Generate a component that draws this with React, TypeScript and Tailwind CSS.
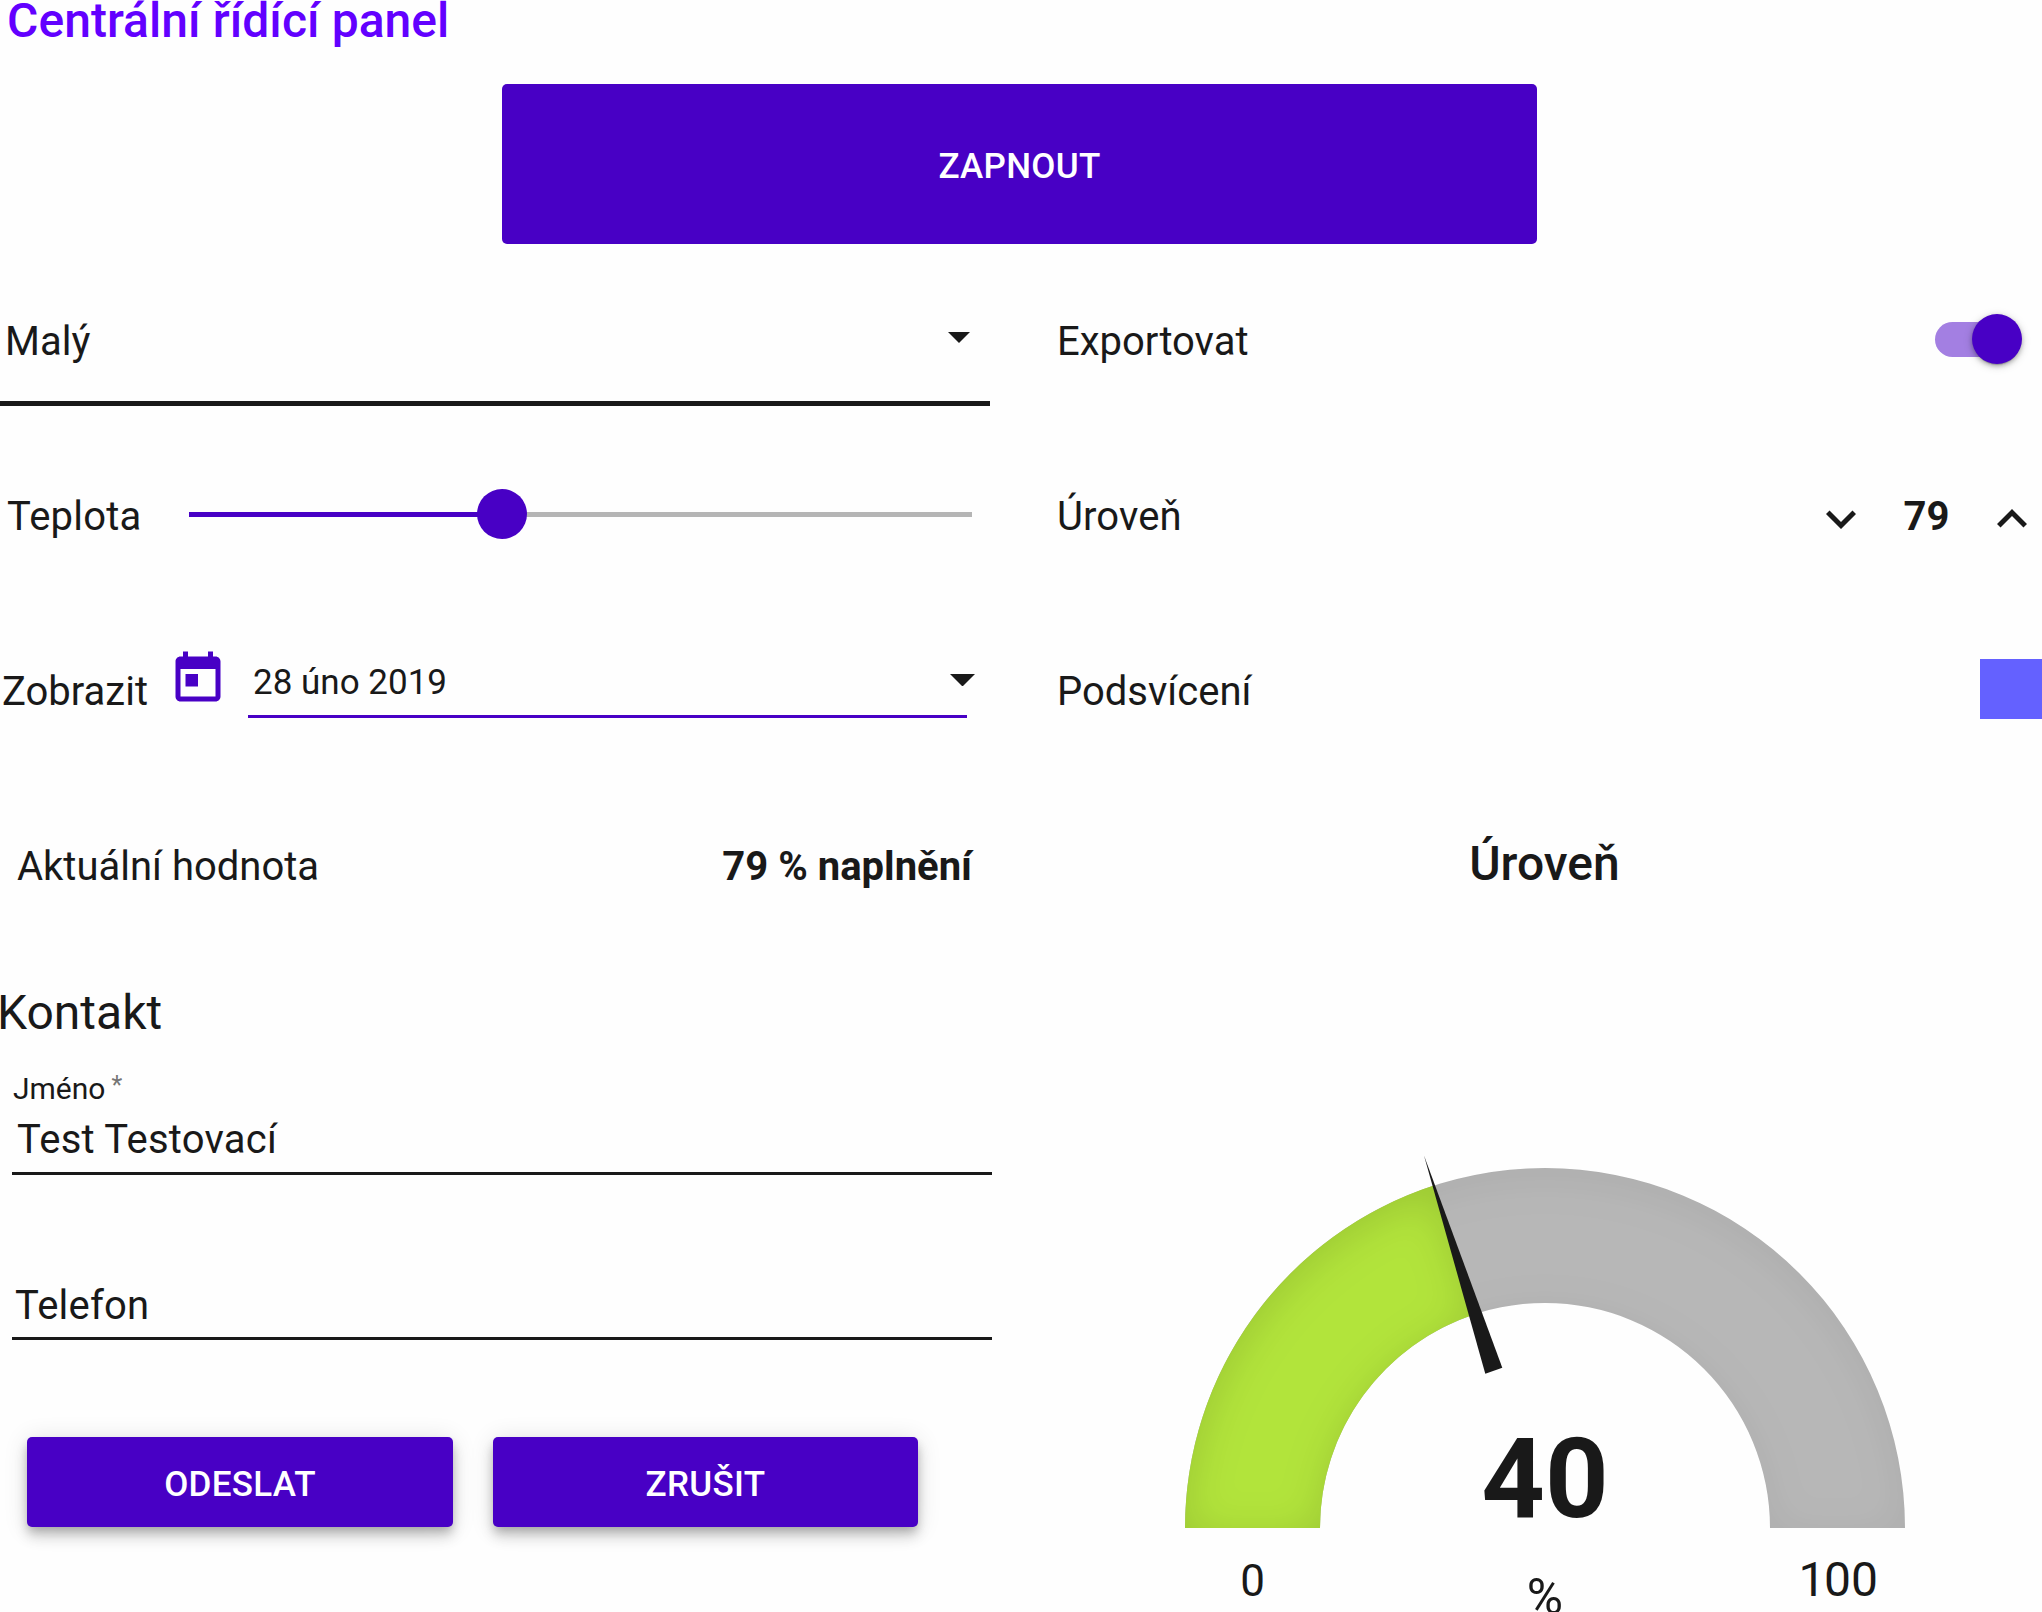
import type { ReactNode } from "react";

const CX = 1545;
const CY = 1528;
const OUTER = 360;
const INNER = 225;

function point(radius: number, percent: number) {
  const angle = Math.PI * (1 - percent / 100);
  return `${(CX + radius * Math.cos(angle)).toFixed(2)} ${(CY - radius * Math.sin(angle)).toFixed(2)}`;
}

function band(from: number, to: number) {
  return `M${point(OUTER, from)}A${OUTER} ${OUTER} 0 0 1 ${point(OUTER, to)}L${point(INNER, to)}A${INNER} ${INNER} 0 0 0 ${point(INNER, from)}Z`;
}

function InnerShadow({ id, opacity }: { id: string; opacity: number }) {
  return (
    <filter id={id} x="-10%" y="-10%" width="120%" height="120%" colorInterpolationFilters="sRGB">
      <feOffset dx="0" dy="8" />
      <feGaussianBlur result="blurred" stdDeviation="22" />
      <feComposite operator="out" in="SourceGraphic" in2="blurred" result="inverse" />
      <feFlood floodColor="#000" floodOpacity={opacity} result="color" />
      <feComposite operator="in" in="color" in2="inverse" result="shadow" />
      <feComposite operator="over" in="shadow" in2="SourceGraphic" />
    </filter>
  );
}

function Gauge() {
  return (
    <svg className="block h-[658px] w-[986px]" viewBox="1056 954 986 658" fill="#191919">
      <defs>
        <InnerShadow id="trackShade" opacity={0.06} />
        <InnerShadow id="levelShade" opacity={0.13} />
      </defs>
      <path d={band(0, 100)} fill="#b7b7b7" filter="url(#trackShade)" />
      <path d={band(0, 40)} fill="#b2e43b" filter="url(#levelShade)" />
      <path d="M1424 1155.5L1502.3 1367.7L1485.3 1373.7Z" />
      <text x="1545" y="1516.7" textAnchor="middle" fontSize="111" fontWeight="700">40</text>
      <text x="1252.5" y="1596.3" textAnchor="middle" fontSize="44">0</text>
      <text x="1545" y="1614" textAnchor="middle" fontSize="49.5">%</text>
      <text x="1838.200" y="1596" textAnchor="middle" fontSize="48">
        1<tspan dx="-1.5">00</tspan>
      </text>
    </svg>
  );
}

function Row({ children, className = "" }: { children: ReactNode; className?: string }) {
  return <div className={`flex h-[175px] items-center ${className}`}>{children}</div>;
}

function SelectField() {
  return (
    <div className="h-[175px]">
      <div className="flex h-[152px] w-[990px] items-center justify-between border-b-[5px] border-[#191919] pt-[28px] pr-5 pl-[5px]">
        <span className="mb-px">Malý</span>
        <svg className="mb-2 h-[11px] w-[22px]" viewBox="0 0 22 11" fill="currentColor">
          <path d="M0 0h22L11 11z" />
        </svg>
      </div>
    </div>
  );
}

function Slider() {
  return (
    <div className="mb-[5px] flex items-center">
      <div className="mt-px h-[5px] w-[289px] bg-[#4800c5]" />
      <div className="z-10 -mx-px size-[50px] rounded-full bg-[#4800c5]" />
      <div className="mt-px h-[5px] w-[446px] bg-[#b5b5b5]" />
    </div>
  );
}

function DateField() {
  return (
    <>
      <svg className="mb-[25px] ml-5 size-[60px] shrink-0" viewBox="0 0 24 24" fill="#4800c5">
        <path d="M19 3h-1V1h-2v2H8V1H6v2H5c-1.11 0-1.99.9-1.99 2L3 19c0 1.1.89 2 2 2h14c1.1 0 2-.9 2-2V5c0-1.1-.9-2-2-2zm0 16H5V8h14v11zM7 10h5v5H7z" />
      </svg>
      <div className="mb-[27px] ml-5 flex h-20 w-[719px] items-center justify-between border-b-[3px] border-[#4800c5] pt-3 pl-[5px] text-[35px] leading-[41px]">
        <span>28 úno 2019</span>
        <svg className="-mr-[7.5px] mb-[5px] h-[12.5px] w-[25px]" viewBox="0 0 25 12.5" fill="currentColor">
          <path d="M0 0h25L12.5 12.5z" />
        </svg>
      </div>
    </>
  );
}

function Switch() {
  return (
    <div className="relative mr-[27px] mb-[5px] h-[35px] w-20 rounded-full bg-[#a37fe2]">
      <div className="absolute -top-[8px] -right-[7px] size-[50px] rounded-full bg-[#4800c5] shadow-[0_3px_1px_-2px_rgba(0,0,0,0.2),0_2px_4px_0_rgba(0,0,0,0.25),0_2px_10px_0_rgba(0,0,0,0.18)]" />
    </div>
  );
}

function Stepper() {
  return (
    <div className="flex items-center">
      <svg className="mt-[5px] size-[60px]" viewBox="0 0 24 24" fill="currentColor">
        <path d="M16.59 8.59L12 13.17 7.41 8.59 6 10l6 6 6-6z" />
      </svg>
      <span className="w-[111px] text-center font-bold">79</span>
      <svg className="mt-[5px] size-[60px]" viewBox="0 0 24 24" fill="currentColor">
        <path d="M12 8l-6 6 1.41 1.41L12 10.83l4.59 4.58L18 14z" />
      </svg>
    </div>
  );
}

function ActionButton({ children, className }: { children: ReactNode; className: string }) {
  return (
    <button
      className={`flex h-[90px] items-center justify-center rounded-[5px] bg-[#4800c5] pt-1 text-[35px] leading-[41px] font-medium tracking-[0.3px] text-white shadow-[0_5px_10px_-2.5px_rgba(0,0,0,0.2),0_10px_12.5px_0_rgba(0,0,0,0.14),0_2.5px_25px_0_rgba(0,0,0,0.12)] ${className}`}
    >
      {children}
    </button>
  );
}

export default function App() {
  return (
    <div className="h-[1612px] w-[2042px] overflow-hidden bg-[#fefefe] font-['Roboto',sans-serif] text-[40px] leading-[47px] text-[#191919]">
      <div className="flex h-[254px] flex-col">
        <h1 className="-mt-2 pl-[7px] text-[48px] leading-[57px] font-medium tracking-[0.05px] text-[#6200ff]">
          Centrální řídící panel
        </h1>
        <button className="mt-[35px] ml-[502px] flex h-40 w-[1035px] items-center justify-center rounded-[5px] bg-[#4800c5] pt-1 text-[35px] leading-[41px] font-medium tracking-[0.3px] text-white">
          ZAPNOUT
        </button>
      </div>

      <div className="grid grid-cols-[1056px_986px]">
        <div>
          <SelectField />
          <Row className="pl-[7px]">
            <span className="w-[182px] tracking-[0.2px]">Teplota</span>
            <Slider />
          </Row>
          <Row className="pl-[2px]">
            <span className="w-[146px]">Zobrazit</span>
            <DateField />
          </Row>
          <Row className="w-[972px] justify-between pl-[17px]">
            <span>Aktuální hodnota</span>
            <span className="font-bold">79 % naplnění</span>
          </Row>

          <h2 className="mt-[30px] -ml-[3px] text-[48px] leading-[57px]">Kontakt</h2>
          <div className="mt-[30px] ml-3 w-[980px] border-b-[3px] border-[#191919] pb-[9px]">
            <div className="flex gap-[6px] pl-px text-[30px] leading-[35px]">
              Jméno<span className="text-[25px] leading-[29px] text-[#757575]">*</span>
            </div>
            <div className="pt-[10px] pl-[5px] tracking-[0.25px]">Test Testovací</div>
          </div>
          <div className="mt-[107px] ml-3 w-[980px] border-b-[3px] border-[#191919] pb-2 pl-[3px] tracking-[0.2px]">Telefon</div>
          <div className="mt-[97px] ml-[27px] flex gap-10">
            <ActionButton className="w-[426px]">ODESLAT</ActionButton>
            <ActionButton className="w-[425px]">ZRUŠIT</ActionButton>
          </div>
        </div>

        <div>
          <Row className="justify-between pl-px">
            <span>Exportovat</span>
            <Switch />
          </Row>
          <Row className="justify-between pl-px">
            <span className="tracking-[0.1px]">Úroveň</span>
            <Stepper />
          </Row>
          <Row className="justify-between pl-px">
            <span>Podsvícení</span>
            <div className="mb-[5px] h-[60px] w-[62px] bg-[#6461ff]" />
          </Row>
          <Row className="justify-center pr-[9px]">
            <h2 className="mb-[6px] text-[48px] leading-[57px] font-medium">Úroveň</h2>
          </Row>
          <Gauge />
        </div>
      </div>
    </div>
  );
}
